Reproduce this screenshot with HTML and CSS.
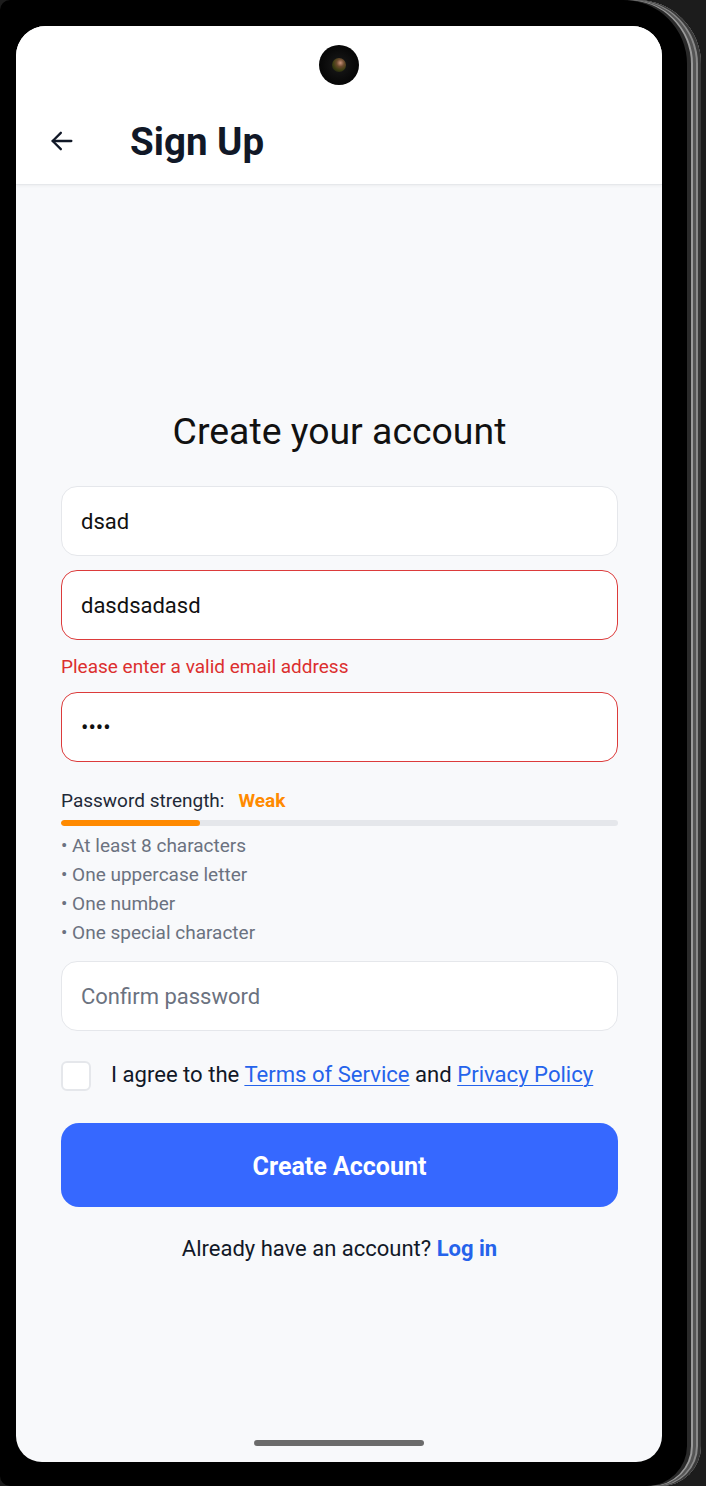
FILE: index.html
```html
<!DOCTYPE html>
<html lang="en">
<head>
<meta charset="utf-8">
<title>Sign Up</title>
<link rel="stylesheet" href="styles.css">
</head>
<body>
<div class="device">
  <div class="screen">
    <header class="appbar">
      <span class="camera"><span class="lens"></span></span>
      <div class="appbar-row">
        <svg class="back" width="28" height="28" viewBox="0 0 24 24" fill="none" stroke="#111827" stroke-width="2" stroke-linecap="round" stroke-linejoin="round"><path d="M20 12H4"/><path d="M11 5l-7 7 7 7"/></svg>
        <h1 class="title">Sign Up</h1>
      </div>
    </header>
    <main class="content">
      <h2 class="heading">Create your account</h2>
      <form class="form">
        <input class="field" type="text" value="dsad">
        <input class="field field-error" type="email" value="dasdsadasd">
        <div class="error-text">Please enter a valid email address</div>
        <input class="field field-error" type="password" value="dsad">
        <div class="strength">
          <div class="strength-row">
            <span class="strength-label">Password strength:</span>
            <span class="strength-value">Weak</span>
          </div>
          <div class="bar"><div class="bar-fill" style="width:25%"></div></div>
          <ul class="reqs">
            <li>• At least 8 characters</li>
            <li>• One uppercase letter</li>
            <li>• One number</li>
            <li>• One special character</li>
          </ul>
        </div>
        <input class="field" type="password" placeholder="Confirm password">
        <div class="agree">
          <span class="checkbox"></span>
          <span class="agree-text">I agree to the <a href="#">Terms of Service</a> and <a href="#">Privacy Policy</a></span>
        </div>
        <button type="button" class="primary">Create Account</button>
        <p class="login">Already have an account? <a href="#">Log in</a></p>
      </form>
    </main>
    <span class="home-indicator"></span>
  </div>
</div>
</body>
</html>
```
FILE: styles.css
```css
* { box-sizing: border-box; }
html, body { margin: 0; padding: 0; }
body {
  width: 706px;
  height: 1486px;
  background: #1c1c1c;
  font-family: Roboto, "Noto Sans", "Liberation Sans", sans-serif;
  overflow: hidden;
}
.device {
  width: 701px;
  height: 1486px;
  background: #000;
  border-radius: 10px 64px 40px 10px;
  padding: 26px 0 0 16px;
  box-shadow:
    inset -3px 0 0 #3a3a3a,
    inset -5px 0 0 #8a8a8a,
    inset -8px 0 0 #555,
    inset -10px 0 0 #9a9a9a,
    inset -14px 0 0 #2a2a2a,
    inset -16px 0 0 #000;
}
.screen {
  position: relative;
  width: 646px;
  height: 1436px;
  background: #f8f9fb;
  border-radius: 30px 30px 26px 26px;
  overflow: hidden;
  display: flex;
  flex-direction: column;
}
.appbar {
  position: relative;
  height: 159px;
  background: #fff;
  border-bottom: 1px solid #e6e8eb;
  box-shadow: 0 1px 3px rgba(0,0,0,0.05);
  display: flex;
  align-items: flex-end;
  padding: 0 0 20px 32px;
  flex-shrink: 0;
}
.camera {
  position: absolute;
  left: 303px;
  top: 19px;
  width: 40px;
  height: 40px;
  border-radius: 50%;
  background: radial-gradient(circle at 50% 50%, #1a1a1a 0, #0a0a0a 55%, #000 100%);
  display: flex;
  align-items: center;
  justify-content: center;
}
.lens {
  width: 14px;
  height: 14px;
  border-radius: 50%;
  background: radial-gradient(circle at 60% 35%, #c9927a 0, #6b4a2e 30%, #3a3d10 60%, #111 100%);
}
.appbar-row {
  display: flex;
  align-items: center;
  height: 46px;
}
.back { display: block; margin-right: 54px; }
.title {
  margin: 0;
  font-size: 38.5px;
  font-weight: 700;
  color: #111827;
  line-height: 46px;
  position: relative;
  top: 1px;
}
.content {
  flex: 1;
  padding: 224px 44px 0 45px;
}
.heading {
  margin: 0;
  text-align: center;
  font-size: 37.4px;
  font-weight: 400;
  line-height: 44px;
  color: #111;
}
.form {
  margin-top: 33px;
  display: flex;
  flex-direction: column;
  gap: 14px;
}
.field {
  display: block;
  width: 100%;
  height: 70px;
  border: 1.5px solid #e5e7eb;
  border-radius: 16px;
  background: #fff;
  padding: 0 19px;
  font-family: inherit;
  font-size: 22px;
  color: #111;
  outline: none;
}
.field::placeholder { color: #6b7280; }
.field-error { border-color: #dc3b3b; }
.error-text {
  font-size: 19px;
  line-height: 24px;
  color: #dc2f2f;
  position: relative;
  top: 1px;
}
.strength { margin-top: 13px; }
.strength-row {
  display: flex;
  align-items: center;
  height: 24px;
  font-size: 19px;
  line-height: 24px;
}
.strength-label { color: #1f2937; }
.strength-value {
  margin-left: 14px;
  color: #ff8a00;
  font-weight: 700;
}
.bar {
  margin-top: 7px;
  height: 6px;
  border-radius: 3px;
  background: #e5e7eb;
  overflow: hidden;
}
.bar-fill {
  height: 100%;
  border-radius: 3px;
  background: #ff8a00;
}
.reqs {
  list-style: none;
  margin: 5px 0 0;
  padding: 0;
  font-size: 19px;
  line-height: 29px;
  color: #6b7280;
}
.agree {
  margin-top: 16px;
  display: flex;
  align-items: center;
  height: 30px;
}
.checkbox {
  width: 30px;
  height: 30px;
  border: 2px solid #e5e7eb;
  border-radius: 6px;
  background: #fff;
  flex-shrink: 0;
}
.agree-text {
  margin-left: 20px;
  font-size: 22.1px;
  color: #111827;
  position: relative;
  top: -2px;
}
.agree-text a {
  color: #2563eb;
  text-decoration: underline;
  text-underline-offset: 3px;
  text-decoration-thickness: 1px;
}
.primary {
  margin-top: 18px;
  height: 84px;
  border: none;
  border-radius: 18px;
  background: #3668ff;
  color: #fff;
  font-family: inherit;
  font-size: 25px;
  font-weight: 700;
  padding-top: 3px;
}
.login {
  margin: 13px 0 0;
  text-align: center;
  font-size: 22px;
  line-height: 30px;
  color: #111827;
}
.login a {
  color: #2563eb;
  font-weight: 700;
  text-decoration: none;
}
.home-indicator {
  position: absolute;
  left: 238px;
  bottom: 16px;
  width: 170px;
  height: 6px;
  border-radius: 3px;
  background: #6b6b6b;
}
```
